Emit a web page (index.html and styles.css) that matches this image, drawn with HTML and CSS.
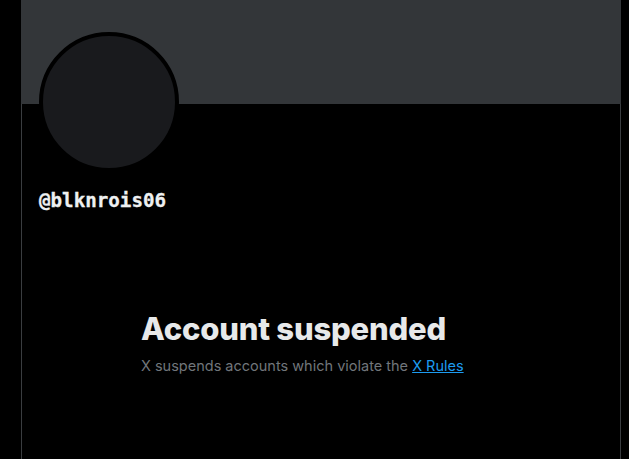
FILE: index.html
```html
<!DOCTYPE html>
<html lang="en">
<head>
    <meta charset="UTF-8">
    <meta name="viewport" content="width=device-width, initial-scale=1.0">
    <title>@blknrois06 / X</title>
    <link rel="stylesheet" href="styles.css">
</head>
<body>
    <div class="column">
        <div class="banner"></div>

        <div class="profile">
            <div class="avatar"></div>
            <div class="handle">@blknrois06</div>
        </div>

        <div class="suspended">
            <h2>Account suspended</h2>
            <p>X suspends accounts which violate the <a href="#">X Rules</a></p>
        </div>
    </div>
</body>
</html>
```

FILE: styles.css
```css
body {
    margin: 0;
    padding: 0;
    background: #000;
    color: #e7e9ea;
    font-family: Inter, "Noto Sans", sans-serif;
}

.column {
    width: 598px;
    min-height: 100vh;
    margin-left: 21px;
    border-left: 1px solid #3a3d40;
    border-right: 1px solid #3a3d40;
}

.banner {
    height: 104px;
    margin: 0 -1px;
    background: #333639;
}

.profile {
    padding: 0 17px;
}

.avatar {
    width: 132px;
    height: 132px;
    margin-top: -72px;
    border: 4px solid #000;
    border-radius: 50%;
    background: #191a1d;
}

.handle {
    margin-top: 17px;
    font-family: "DejaVu Sans Mono", monospace;
    font-weight: bold;
    font-size: 19.2px;
    line-height: 24px;
    color: #eef0f1;
    -webkit-text-stroke: 0.3px #eef0f1;
}

.suspended {
    padding: 98px 0 0 119px;
}

.suspended h2 {
    margin: 0;
    font-size: 31px;
    font-weight: 800;
    line-height: 36px;
    letter-spacing: -0.2px;
}

.suspended p {
    margin: 9px 0 0;
    font-size: 14.5px;
    line-height: 20px;
    color: #71767b;
}

.suspended a {
    color: #1d9bf0;
}
```
